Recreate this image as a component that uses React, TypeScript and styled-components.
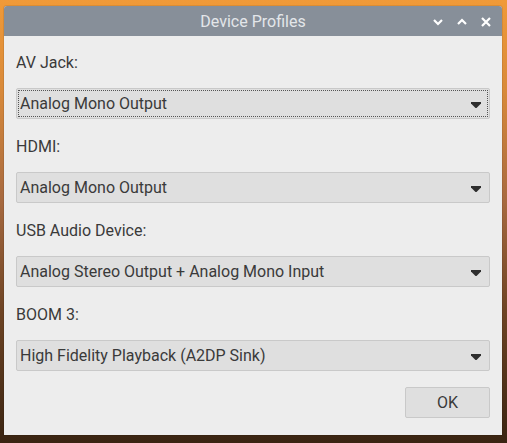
import styled, { createGlobalStyle } from 'styled-components'

const Global = createGlobalStyle`
    html, body {
        margin: 0;
        padding: 0;
    }
    body {
        width: 507px;
        height: 443px;
        overflow: hidden;
        font-family: Roboto, "Liberation Sans", sans-serif;
        background: linear-gradient(180deg, #f09a38 0%, #d98a3a 20%, #a86a40 45%, #6e4424 70%, #3a2412 100%);
    }
`;

const Desktop = styled.div`
    padding: 6px 5px 0 4px;
`;

const Window = styled.div`
    width: 498px;
    background: #ededed;
    border-radius: 3px 3px 0 0;
    box-shadow: 0 0 0 1px rgba(0, 0, 0, 0.08);
    overflow: hidden;
`;

const TitleBar = styled.div`
    height: 30px;
    background: #878f99;
    display: grid;
    grid-template-columns: 1fr auto 1fr;
    align-items: center;
`;

const Title = styled.div`
    grid-column: 2;
    color: #e3e6e9;
    font-size: 16px;
    line-height: 30px;
    padding-top: 1px;
`;

const Controls = styled.div`
    grid-column: 3;
    justify-self: end;
    display: flex;
    align-items: center;
    gap: 14px;
    padding-right: 11px;
`;

const CtrlIcon = styled.svg`
    display: block;
    fill: none;
    stroke: #ffffff;
    stroke-width: 2.2;
`;

const Body = styled.div`
    padding: 17px 12px 17px 12px;
    display: flex;
    flex-direction: column;
`;

const Field = styled.div<{ $last?: boolean }>`
    display: flex;
    flex-direction: column;
    gap: 15px;
    margin-bottom: ${(p) => (p.$last ? '16px' : '18px')};
`;

const Label = styled.div`
    font-size: 16px;
    line-height: 20px;
    color: #3a3a3a;
`;

const Combo = styled.div<{ $focused?: boolean }>`
    position: relative;
    height: 31px;
    box-sizing: border-box;
    border: 1px solid #c9c9c9;
    border-radius: 2px;
    background: #dfdfdf;
    display: flex;
    align-items: center;
    justify-content: space-between;
    padding: 0 8px 0 3px;
    font-size: 16px;
    line-height: 29px;
    color: #3a3a3a;

    &::after {
        content: '';
        display: ${(p) => (p.$focused ? 'block' : 'none')};
        position: absolute;
        inset: 1px;
        border: 1px dotted #555555;
    }
`;

const Arrow = styled.svg`
    display: block;
    fill: #2e2e2e;
    margin-top: 3px;
`;

const Footer = styled.div`
    display: flex;
    justify-content: flex-end;
`;

const Button = styled.button`
    width: 85px;
    height: 31px;
    box-sizing: border-box;
    border: 1px solid #c9c9c9;
    border-radius: 2px;
    background: #dfdfdf;
    font-family: Roboto, "Liberation Sans", sans-serif;
    font-size: 16px;
    color: #3a3a3a;
    padding: 0;
`;

const fields = [
    { label: 'AV Jack:', value: 'Analog Mono Output', focused: true },
    { label: 'HDMI:', value: 'Analog Mono Output' },
    { label: 'USB Audio Device:', value: 'Analog Stereo Output + Analog Mono Input' },
    { label: 'BOOM 3:', value: 'High Fidelity Playback (A2DP Sink)' },
];

function App() {
    return (
        <>
            <Global />
            <Desktop>
                <Window>
                    <TitleBar>
                        <Title>Device Profiles</Title>
                        <Controls>
                            <CtrlIcon width="10" height="8" viewBox="0 0 10 8">
                                <path d="M1 2 L5 6 L9 2" />
                            </CtrlIcon>
                            <CtrlIcon width="10" height="8" viewBox="0 0 10 8">
                                <path d="M1 6 L5 2 L9 6" />
                            </CtrlIcon>
                            <CtrlIcon width="10" height="10" viewBox="0 0 10 10">
                                <path d="M1 1 L9 9 M9 1 L1 9" />
                            </CtrlIcon>
                        </Controls>
                    </TitleBar>
                    <Body>
                        {fields.map((f, i) => (
                            <Field key={f.label} $last={i === fields.length - 1}>
                                <Label>{f.label}</Label>
                                <Combo $focused={f.focused}>
                                    <span>{f.value}</span>
                                    <Arrow width="10" height="6" viewBox="0 0 10 6">
                                        <polygon points="0,0 10,0 10,1.5 5.5,6 4.5,6 0,1.5" />
                                    </Arrow>
                                </Combo>
                            </Field>
                        ))}
                        <Footer>
                            <Button>OK</Button>
                        </Footer>
                    </Body>
                </Window>
            </Desktop>
        </>
    );
}

export default App;
